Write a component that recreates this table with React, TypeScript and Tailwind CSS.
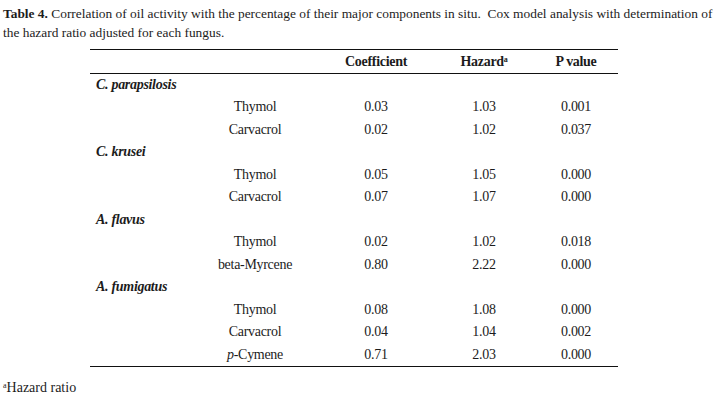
import React from "react";

type Row = { kind: "species"; name: string } | { kind: "item"; name: React.ReactNode; c: string; h: string; p: string };

const rows: Row[] = [
  { kind: "species", name: "C. parapsilosis" },
  { kind: "item", name: "Thymol", c: "0.03", h: "1.03", p: "0.001" },
  { kind: "item", name: "Carvacrol", c: "0.02", h: "1.02", p: "0.037" },
  { kind: "species", name: "C. krusei" },
  { kind: "item", name: "Thymol", c: "0.05", h: "1.05", p: "0.000" },
  { kind: "item", name: "Carvacrol", c: "0.07", h: "1.07", p: "0.000" },
  { kind: "species", name: "A. flavus" },
  { kind: "item", name: "Thymol", c: "0.02", h: "1.02", p: "0.018" },
  { kind: "item", name: "beta-Myrcene", c: "0.80", h: "2.22", p: "0.000" },
  { kind: "species", name: "A. fumigatus" },
  { kind: "item", name: "Thymol", c: "0.08", h: "1.08", p: "0.000" },
  { kind: "item", name: "Carvacrol", c: "0.04", h: "1.04", p: "0.002" },
  { kind: "item", name: (<><i>p</i>-Cymene</>), c: "0.71", h: "2.03", p: "0.000" },
];

const cols = "grid grid-cols-[110px_110px_132px_84px_92px]";

export default function App() {
  return (
    <div className="w-[720px] h-[401px] bg-white text-[#1c1c1c] overflow-hidden font-['Liberation_Serif',serif]">
      <div className="pl-[3px] pt-[4px] w-[714px] text-[13.4px] leading-[19px]">
        <span className="font-bold">Table 4.</span> Correlation of oil activity with the percentage of their major components in situ.&nbsp; Cox model analysis with determination of the hazard ratio adjusted for each fungus.
      </div>
      <div className="ml-[90px] mt-[7px] w-[528px] text-[14px] tracking-[-0.3px]">
        <div className="h-px bg-[#111]" />
        <div className={`${cols} h-[23px] items-center font-bold`}>
          <div />
          <div />
          <div className="text-center">Coefficient</div>
          <div className="text-center">
            Hazard<sup className="text-[8px] font-bold">a</sup>
          </div>
          <div className="text-center pl-2">P value</div>
        </div>
        <div className="h-px bg-[#111]" />
        <div className="grid grid-rows-[21px_23px_22px_23px_22px_23px_22px_23px_22px_23px_22px_23px_22px] pb-px">
          {rows.map((r, i) =>
            r.kind === "species" ? (
              <div key={i} className="flex items-center pl-[6px] italic font-bold">
                {r.name}
              </div>
            ) : (
              <div key={i} className={`${cols} items-center`}>
                <div />
                <div className="text-center whitespace-nowrap">{r.name}</div>
                <div className="text-center">{r.c}</div>
                <div className="text-center">{r.h}</div>
                <div className="text-center pl-2">{r.p}</div>
              </div>
            )
          )}
        </div>
        <div className="h-px bg-[#111]" />
      </div>
      <div className="pl-[3px] mt-[10px] text-[14px]">
        <sup className="text-[8px]">a</sup>Hazard ratio
      </div>
    </div>
  );
}
